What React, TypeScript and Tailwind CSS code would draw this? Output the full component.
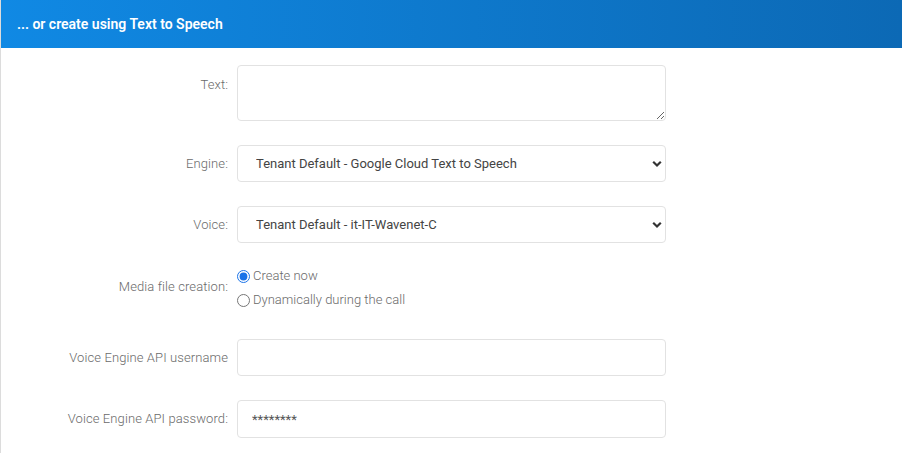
import React from 'react';

const labelCls = 'w-[236px] shrink-0 pr-[9px] text-right text-[13px] font-light tracking-[0.1px] text-[#6a6a6a]';
const boxCls = 'w-[429px] rounded-[4px] border border-[#e2e2e2] bg-white text-[13px] text-[#3a3a3a] outline-none';

const SelectBox: React.FC<{ value: string }> = ({ value }) => (
    <div className="relative w-[429px]">
        <select
            defaultValue={value}
            className={`${boxCls} h-[37px] appearance-none pl-[18px] pr-[28px] text-[12.8px] text-[#444]`}
        >
            <option>{value}</option>
        </select>
        <svg className="pointer-events-none absolute right-[4px] top-1/2 -translate-y-1/2" width="10" height="7" viewBox="0 0 10 7">
            <path d="M1.2 1.2 L5 5 L8.8 1.2" fill="none" stroke="#333" strokeWidth="2.2" />
        </svg>
    </div>
);

export default function App() {
    return (
        <div className="min-h-screen bg-white font-['Roboto',sans-serif]">
            <div className="flex h-[453px] flex-col border-l border-[#dcdcdc]">
                <div className="flex h-[48px] shrink-0 items-center bg-linear-to-r from-[#1089e4] to-[#0c69b5] pl-[16px] text-[14px] font-semibold text-white">
                    ... or create using Text to Speech
                </div>

                <div className="flex flex-col pt-[17px]">
                    <div className="flex items-start">
                        <label className={`${labelCls} pt-[10px]`}>Text:</label>
                        <textarea className={`${boxCls} h-[56px] px-[12px] py-[8px]`} />
                    </div>

                    <div className="mt-[24px] flex items-center">
                        <label className={labelCls}>Engine:</label>
                        <SelectBox value="Tenant Default - Google Cloud Text to Speech" />
                    </div>

                    <div className="mt-[24px] flex items-center">
                        <label className={labelCls}>Voice:</label>
                        <SelectBox value="Tenant Default - it-IT-Wavenet-C" />
                    </div>

                    <div className="mt-[21px] flex items-center">
                        <label className={`${labelCls} -mt-[3px]`}>Media file creation:</label>
                        <div className="flex flex-col text-[13px] font-light text-[#6a6a6a]">
                            <label className="flex h-[24px] items-center gap-[3px]">
                                <input type="radio" name="mfc" defaultChecked className="m-0 h-[13px] w-[13px] accent-[#1a73e8]" />
                                Create now
                            </label>
                            <label className="flex h-[24px] items-center gap-[3px]">
                                <input type="radio" name="mfc" className="m-0 h-[13px] w-[13px]" />
                                Dynamically during the call
                            </label>
                        </div>
                    </div>

                    <div className="mt-[27px] flex items-center">
                        <label className={labelCls}>Voice Engine API username</label>
                        <input type="text" className={`${boxCls} h-[37px] px-[15px]`} />
                    </div>

                    <div className="mt-[24px] flex items-center">
                        <label className={labelCls}>Voice Engine API password:</label>
                        <input type="text" defaultValue="********" className={`${boxCls} h-[38px] px-[14px] text-[#555]`} />
                    </div>
                </div>
            </div>
        </div>
    );
}
